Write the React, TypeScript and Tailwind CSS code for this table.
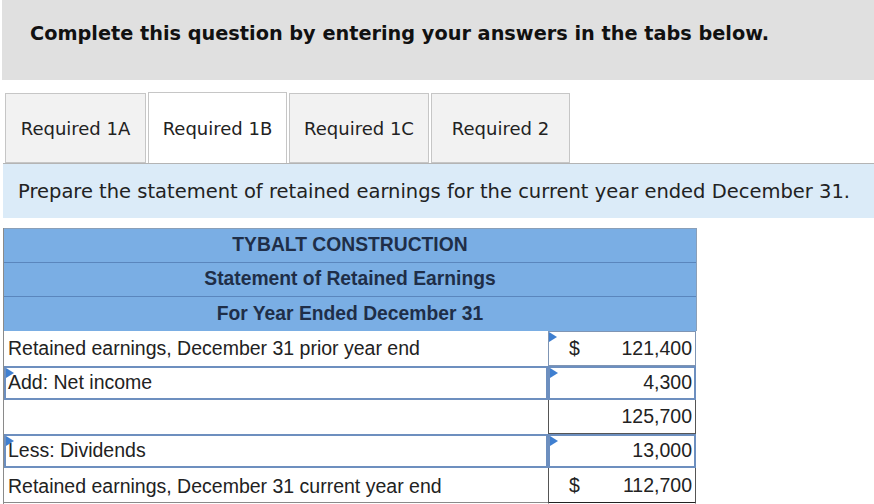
import React from "react";

const Tri = () => (
  <svg className="absolute left-0 top-0" width="8" height="10" viewBox="0 0 8 10">
    <polygon points="0,0 8,5 0,10" fill="#3f7fd0" />
  </svg>
);

const arial = { fontFamily: '"Liberation Sans", Arial, sans-serif' };
const dejavu = { fontFamily: '"DejaVu Sans", Verdana, sans-serif' };

export default function App() {
  const tabs = [
    { label: "Required 1A", w: "w-[141px]", active: false },
    { label: "Required 1B", w: "w-[139px]", active: true },
    { label: "Required 1C", w: "w-[140px]", active: false },
    { label: "Required 2", w: "w-[139px]", active: false },
  ];
  return (
    <div className="w-[874px] h-[504px] bg-white overflow-hidden">
      <div className="ml-[2px] h-[80px] bg-[#e0e0e0] pl-[28px] pt-[22px]">
        <div className="text-[19.3px] leading-[24px] font-bold text-[#111]" style={dejavu}>
          Complete this question by entering your answers in the tabs below.
        </div>
      </div>
      <div className="mt-[12px] pl-[5px] flex gap-[2px] items-end h-[71px]">
        {tabs.map((t) => (
          <div
            key={t.label}
            className={`${t.w} flex items-center justify-center text-[18px] text-[#222] border border-[#c6c6c6] ${
              t.active ? "bg-white h-[71px] border-b-0 relative z-10 pb-[1px]" : "bg-[#f2f2f2] h-[70px]"
            }`}
            style={dejavu}
          >
            <span className="mt-[1px]">{t.label}</span>
          </div>
        ))}
      </div>
      <div className="ml-[3px] h-[55px] bg-[#dbebf8] border-t border-[#b4b4b4] flex items-center pl-[15px]">
        <span className="text-[19.5px] text-[#222] mt-[2px]" style={dejavu}>
          Prepare the statement of retained earnings for the current year ended December 31.
        </span>
      </div>
      <div className="mt-[10px] ml-[3px] w-[694px] border-l border-[#8a8a8a]" style={arial}>
        <div className="bg-[#7aaee4] border-t border-r border-[#8a9fb8] text-[#1f2e48] font-bold text-[19.3px]">
          <div className="h-[34px] flex items-center justify-center border-b border-[#5a86bd]">
            TYBALT CONSTRUCTION
          </div>
          <div className="h-[34px] flex items-center justify-center border-b border-[#5a86bd]">
            Statement of Retained Earnings
          </div>
          <div className="h-[34px] flex items-center justify-center">For Year Ended December 31</div>
        </div>
        <div className="text-[19.5px] text-[#222]">
          {/* Row 1 */}
          <div className="h-[35px] flex">
            <div className="w-[544px] flex items-center pl-[4px]">
              Retained earnings, December 31 prior year end
            </div>
            <div className="w-[148px] relative border border-[#7f95b4] flex items-center justify-between pl-[20px] pr-[3px]">
              <Tri />
              <span>$</span>
              <span>121,400</span>
            </div>
          </div>
          {/* Row 2 */}
          <div className="h-[34px] flex">
            <div className="w-[544px] relative border-2 border-[#6d8fbf] flex items-center pl-[2px]">
              <Tri />
              Add: Net income
            </div>
            <div className="w-[148px] relative border-2 border-[#6d8fbf] flex items-center justify-end pr-[2px]">
              <Tri />
              <span>4,300</span>
            </div>
          </div>
          {/* Row 3 */}
          <div className="h-[34px] flex">
            <div className="w-[544px]" />
            <div className="w-[148px] border border-[#555] border-t-0 flex items-center justify-end pr-[3px]">
              <span>125,700</span>
            </div>
          </div>
          {/* Row 4 */}
          <div className="h-[34px] flex">
            <div className="w-[544px] relative border-2 border-[#6d8fbf] flex items-center pl-[2px]">
              <Tri />
              Less: Dividends
            </div>
            <div className="w-[148px] relative border-2 border-[#6d8fbf] flex items-center justify-end pr-[2px]">
              <Tri />
              <span>13,000</span>
            </div>
          </div>
          {/* Row 5 */}
          <div className="h-[37px] flex">
            <div className="w-[544px] flex items-center pl-[4px] pt-[3px] border-b border-[#8a8a8a] h-[35px]">
              Retained earnings, December 31 current year end
            </div>
            <div
              className="w-[148px] border border-[#555] border-b-[3px] border-b-[#222] flex items-center justify-between pl-[20px] pr-[3px] pt-[2px] h-[37px]"
              style={{ borderStyle: "solid solid double solid", borderTopWidth: 0 }}
            >
              <span>$</span>
              <span>112,700</span>
            </div>
          </div>
        </div>
      </div>
    </div>
  );
}
